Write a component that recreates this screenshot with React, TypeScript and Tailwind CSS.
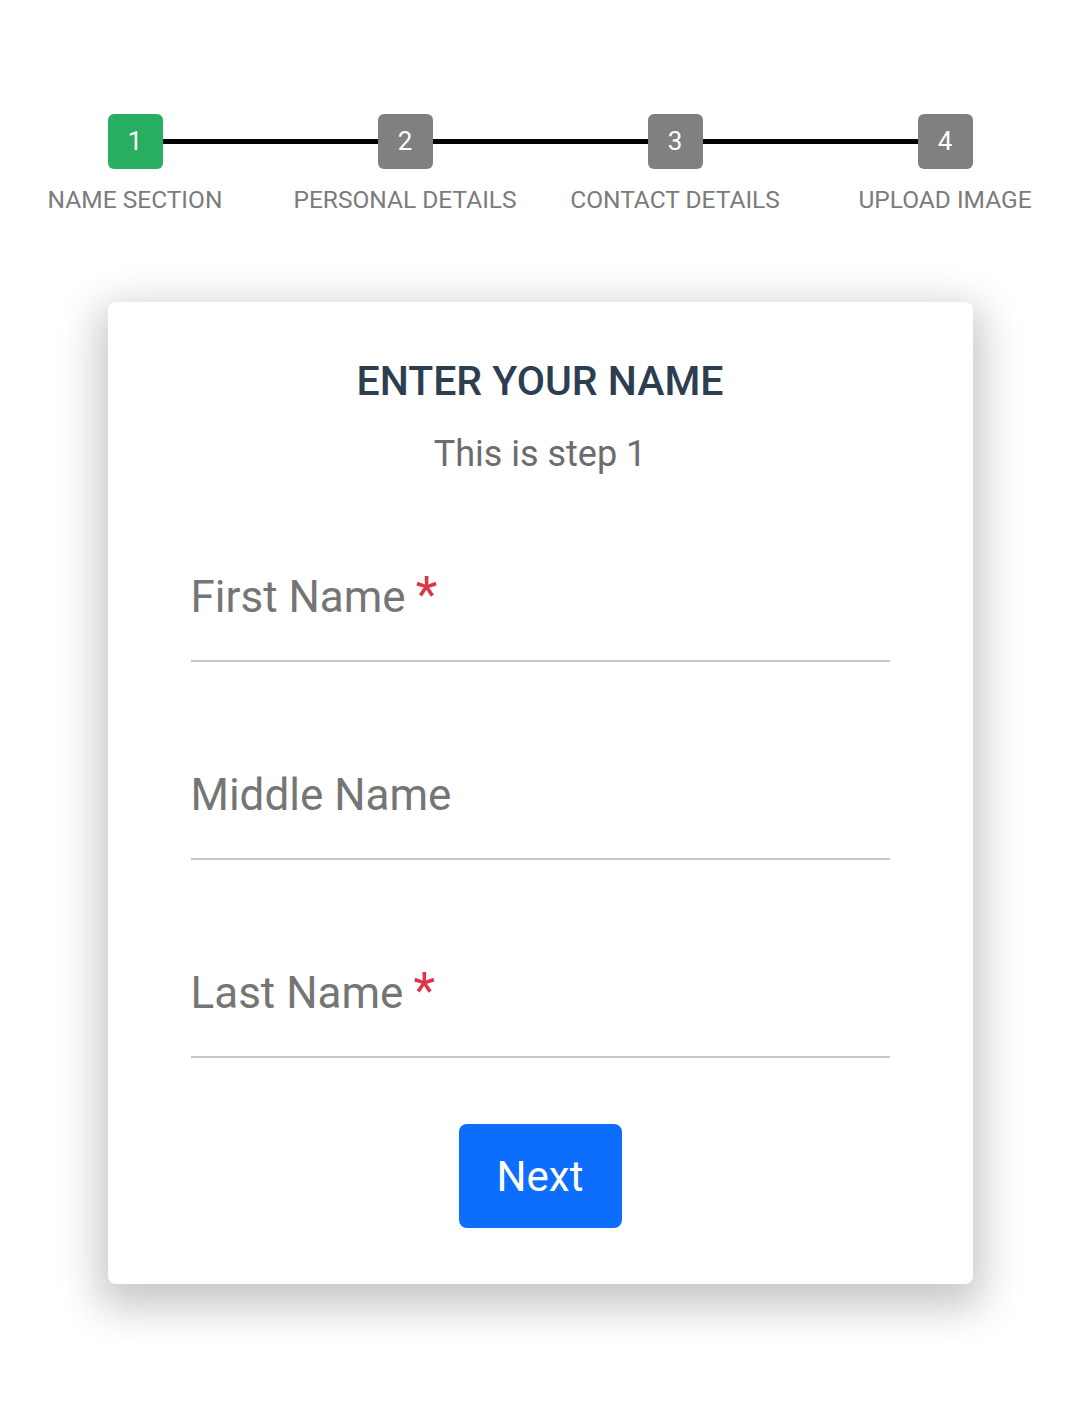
import { useState } from 'react'

const steps = ['NAME SECTION', 'PERSONAL DETAILS', 'CONTACT DETAILS', 'UPLOAD IMAGE']

function Field({ label, required, first }: { label: string; required?: boolean; first?: boolean }) {
  const [value, setValue] = useState('')
  return (
    <label className={`block border-b-2 border-[#c8c8c8] pb-[37px] ${first ? 'mt-[96px]' : 'mt-[107px]'}`}>
      <span className="flex items-start text-[44px] leading-[52px] text-[#757575]">
        {value === '' ? label : ''}
        {value === '' && required && (
          <span className="ml-[10px] text-[50px] leading-[48px] text-[#dc3545]">*</span>
        )}
        <input
          value={value}
          onChange={(e) => setValue(e.target.value)}
          className={`bg-transparent outline-none ${value === '' ? 'w-0' : 'w-full'}`}
        />
      </span>
    </label>
  )
}

export default function App() {
  const [active] = useState(0)

  return (
    <div className="min-h-screen bg-white pt-[114px] pb-[128px] font-['Roboto',sans-serif]">
      <div className="grid grid-cols-4">
        {steps.map((name, i) => (
          <div key={name} className="flex flex-col items-center">
            <div className="flex w-full items-center">
              <div className={`h-[5px] flex-1 ${i === 0 ? 'bg-transparent' : 'bg-black'}`}></div>
              <div
                className={`flex h-[55px] w-[55px] items-center justify-center rounded-[6px] text-[26px] text-white ${
                  i === active ? 'bg-[#27ae60]' : 'bg-[#808080]'
                }`}
              >
                {i + 1}
              </div>
              <div className={`h-[5px] flex-1 ${i === steps.length - 1 ? 'bg-transparent' : 'bg-black'}`}></div>
            </div>
            <div className="mt-[17px] whitespace-nowrap text-[24.5px] leading-[28px] text-[#7b7b7b]">{name}</div>
          </div>
        ))}
      </div>

      <div className="mx-auto mt-[88px] w-[865px] rounded-[8px] bg-white px-[83px] pt-[55px] pb-[56px] shadow-[0_14px_40px_10px_rgba(0,0,0,0.22)]">
        <h2 className="text-center text-[41px] leading-[48px] font-medium text-[#2c3e50]">ENTER YOUR NAME</h2>
        <p className="mt-[28px] text-center text-[36px] leading-[42px] text-[#6c6c6c]">This is step 1</p>

        <Field label="First Name" required first />
        <Field label="Middle Name" />
        <Field label="Last Name" required />

        <div className="mt-[66px] flex justify-center">
          <button className="h-[104px] w-[163px] rounded-[8px] bg-[#0d6efd] text-[42px] text-white">Next</button>
        </div>
      </div>
    </div>
  )
}
